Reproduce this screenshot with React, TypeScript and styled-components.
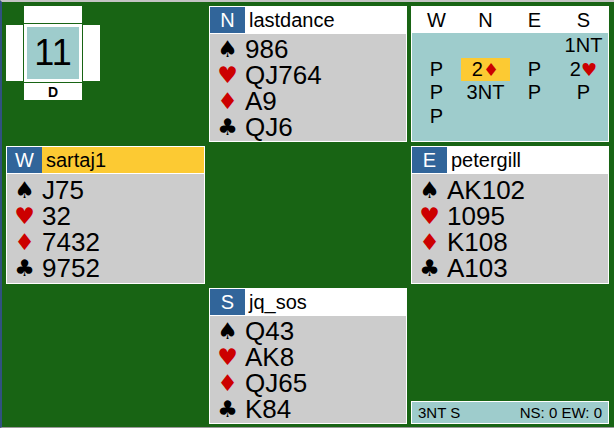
import React from 'react';
import styled, { createGlobalStyle } from 'styled-components';

const GlobalStyle = createGlobalStyle`
  body {
    margin: 0;
    background: #ffffff;
    font-family: 'Liberation Sans', Arial, sans-serif;
  }
`;

const palette = {
  green: '#186414',
  teal: '#9ecccc',
  gray: '#cccccc',
  blue: '#31659a',
  yellow: '#fcca33',
  red: '#cc0000',
};

const Table = styled.div`
  width: 614px;
  height: 428px;
  box-sizing: border-box;
  border-top: 2px solid #c4c4c4;
  border-left: 2px solid #30517f;
  border-bottom: 1px solid #9a9a9a;
  background: ${palette.green};
  padding: 4px 5px 3px 4px;
  display: grid;
  grid-template-columns: 199px 198px 198px;
  grid-template-rows: 136px 138px 136px;
  gap: 4px;
`;

const Cell = styled.div<{ $end?: boolean }>`
  display: flex;
  flex-direction: column;
  justify-content: ${(p) => (p.$end ? 'flex-end' : 'flex-start')};
  min-width: 0;
`;

// vulnerability / dealer indicator
const Vul = styled.div`
  display: grid;
  grid-template-columns: 17px 58px 17px;
  grid-template-rows: 17px 58px 17px;
  gap: 1px;
`;

const VulBar = styled.div<{ $col: number; $row: number }>`
  grid-column: ${(p) => p.$col};
  grid-row: ${(p) => p.$row};
  background: #ffffff;
  display: flex;
  align-items: center;
  justify-content: center;
  font-size: 14px;
  font-weight: bold;
  color: #000;
  ${(p) => (p.$col !== 2 ? 'margin: 1px 0;' : '')}
`;

const BoardNum = styled.div`
  grid-column: 2;
  grid-row: 2;
  background: #ffffff;
  padding: 3px;
  display: flex;
`;

const BoardInner = styled.div`
  flex: 1;
  background: ${palette.teal};
  display: flex;
  align-items: center;
  justify-content: center;
  font-size: 36px;
  color: #000;
`;

// hands
const HandBox = styled.div`
  flex: 1;
  border: 1px solid #ffffff;
  background: ${palette.gray};
  display: flex;
  flex-direction: column;
`;

const HandHeader = styled.div`
  height: 26px;
  display: flex;
  border-bottom: 1px solid #ffffff;
`;

const Seat = styled.div`
  width: 35px;
  background: ${palette.blue};
  color: #ffffff;
  font-size: 20px;
  line-height: 26px;
  text-align: center;
`;

const PlayerName = styled.div<{ $active?: boolean }>`
  flex: 1;
  background: ${(p) => (p.$active ? palette.yellow : '#ffffff')};
  color: #000;
  font-size: 20px;
  line-height: 26px;
  padding-left: 4px;
`;

const HandBody = styled.div`
  flex: 1;
  display: flex;
  flex-direction: column;
  justify-content: center;
`;

const SuitRow = styled.div`
  display: flex;
  align-items: center;
  height: 26px;
`;

const Suit = styled.span<{ $red?: boolean }>`
  width: 35px;
  text-align: center;
  font-family: 'DejaVu Sans', sans-serif;
  font-size: 23px;
  line-height: 26px;
  color: ${(p) => (p.$red ? palette.red : '#000')};
`;

const Cards = styled.span`
  font-size: 26px;
  color: #000;
  line-height: 26px;
`;

// bidding
const BidBox = styled.div`
  flex: 1;
  border: 1px solid #ffffff;
  background: ${palette.teal};
  display: flex;
  flex-direction: column;
`;

const BidHeader = styled.div`
  height: 26px;
  background: #ffffff;
  display: grid;
  grid-template-columns: repeat(4, 1fr);
`;

const BidHead = styled.div`
  font-size: 20px;
  line-height: 26px;
  text-align: center;
  color: #000;
`;

const BidGrid = styled.div`
  display: grid;
  grid-template-columns: repeat(4, 1fr);
  grid-auto-rows: 23.5px;
  padding-top: 1px;
`;

const Bid = styled.div<{ $hl?: boolean }>`
  font-size: 20px;
  line-height: 23.5px;
  text-align: center;
  color: #000;
  background: ${(p) => (p.$hl ? palette.yellow : 'transparent')};
`;

const BidSuit = styled.span<{ $red?: boolean }>`
  font-family: 'DejaVu Sans', sans-serif;
  font-size: 18px;
  color: ${(p) => (p.$red ? palette.red : '#000')};
`;

const Status = styled.div`
  border: 1px solid #ffffff;
  background: ${palette.teal};
  height: 21px;
  display: flex;
  justify-content: space-between;
  align-items: center;
  padding: 0 6px;
  font-size: 15px;
  color: #000;
`;

const SUITS = [
  { sym: '♠', red: false },
  { sym: '♥', red: true },
  { sym: '♦', red: true },
  { sym: '♣', red: false },
];

interface HandProps {
  seat: string;
  name: string;
  cards: string[];
  active?: boolean;
}

const Hand: React.FC<HandProps> = ({ seat, name, cards, active }) => (
  <HandBox>
    <HandHeader>
      <Seat>{seat}</Seat>
      <PlayerName $active={active}>{name}</PlayerName>
    </HandHeader>
    <HandBody>
      {SUITS.map((s, i) => (
        <SuitRow key={s.sym}>
          <Suit $red={s.red}>{s.sym}</Suit>
          <Cards>{cards[i]}</Cards>
        </SuitRow>
      ))}
    </HandBody>
  </HandBox>
);

type BidCell = { text: string; suit?: string; red?: boolean; hl?: boolean };

const bids: BidCell[] = [
  { text: '' }, { text: '' }, { text: '' }, { text: '1NT' },
  { text: 'P' }, { text: '2', suit: '♦', red: true, hl: true }, { text: 'P' }, { text: '2', suit: '♥', red: true },
  { text: 'P' }, { text: '3NT' }, { text: 'P' }, { text: 'P' },
  { text: 'P' },
];

const App: React.FC = () => {
  return (
    <>
      <GlobalStyle />
      <Table>
        <Cell>
          <Vul>
            <VulBar $col={2} $row={1} />
            <VulBar $col={1} $row={2} />
            <BoardNum>
              <BoardInner>11</BoardInner>
            </BoardNum>
            <VulBar $col={3} $row={2} />
            <VulBar $col={2} $row={3}>D</VulBar>
          </Vul>
        </Cell>
        <Cell>
          <Hand seat='N' name='lastdance' cards={['986', 'QJ764', 'A9', 'QJ6']} />
        </Cell>
        <Cell>
          <BidBox>
            <BidHeader>
              {['W', 'N', 'E', 'S'].map((s) => (
                <BidHead key={s}>{s}</BidHead>
              ))}
            </BidHeader>
            <BidGrid>
              {bids.map((b, i) => (
                <Bid key={i} $hl={b.hl}>
                  {b.text}
                  {b.suit && <BidSuit $red={b.red}>{b.suit}</BidSuit>}
                </Bid>
              ))}
            </BidGrid>
          </BidBox>
        </Cell>
        <Cell>
          <Hand seat='W' name='sartaj1' active cards={['J75', '32', '7432', '9752']} />
        </Cell>
        <Cell />
        <Cell>
          <Hand seat='E' name='petergill' cards={['AK102', '1095', 'K108', 'A103']} />
        </Cell>
        <Cell />
        <Cell>
          <Hand seat='S' name='jq_sos' cards={['Q43', 'AK8', 'QJ65', 'K84']} />
        </Cell>
        <Cell $end>
          <Status>
            <span>3NT S</span>
            <span>NS: 0 EW: 0</span>
          </Status>
        </Cell>
      </Table>
    </>
  );
};

export default App;
